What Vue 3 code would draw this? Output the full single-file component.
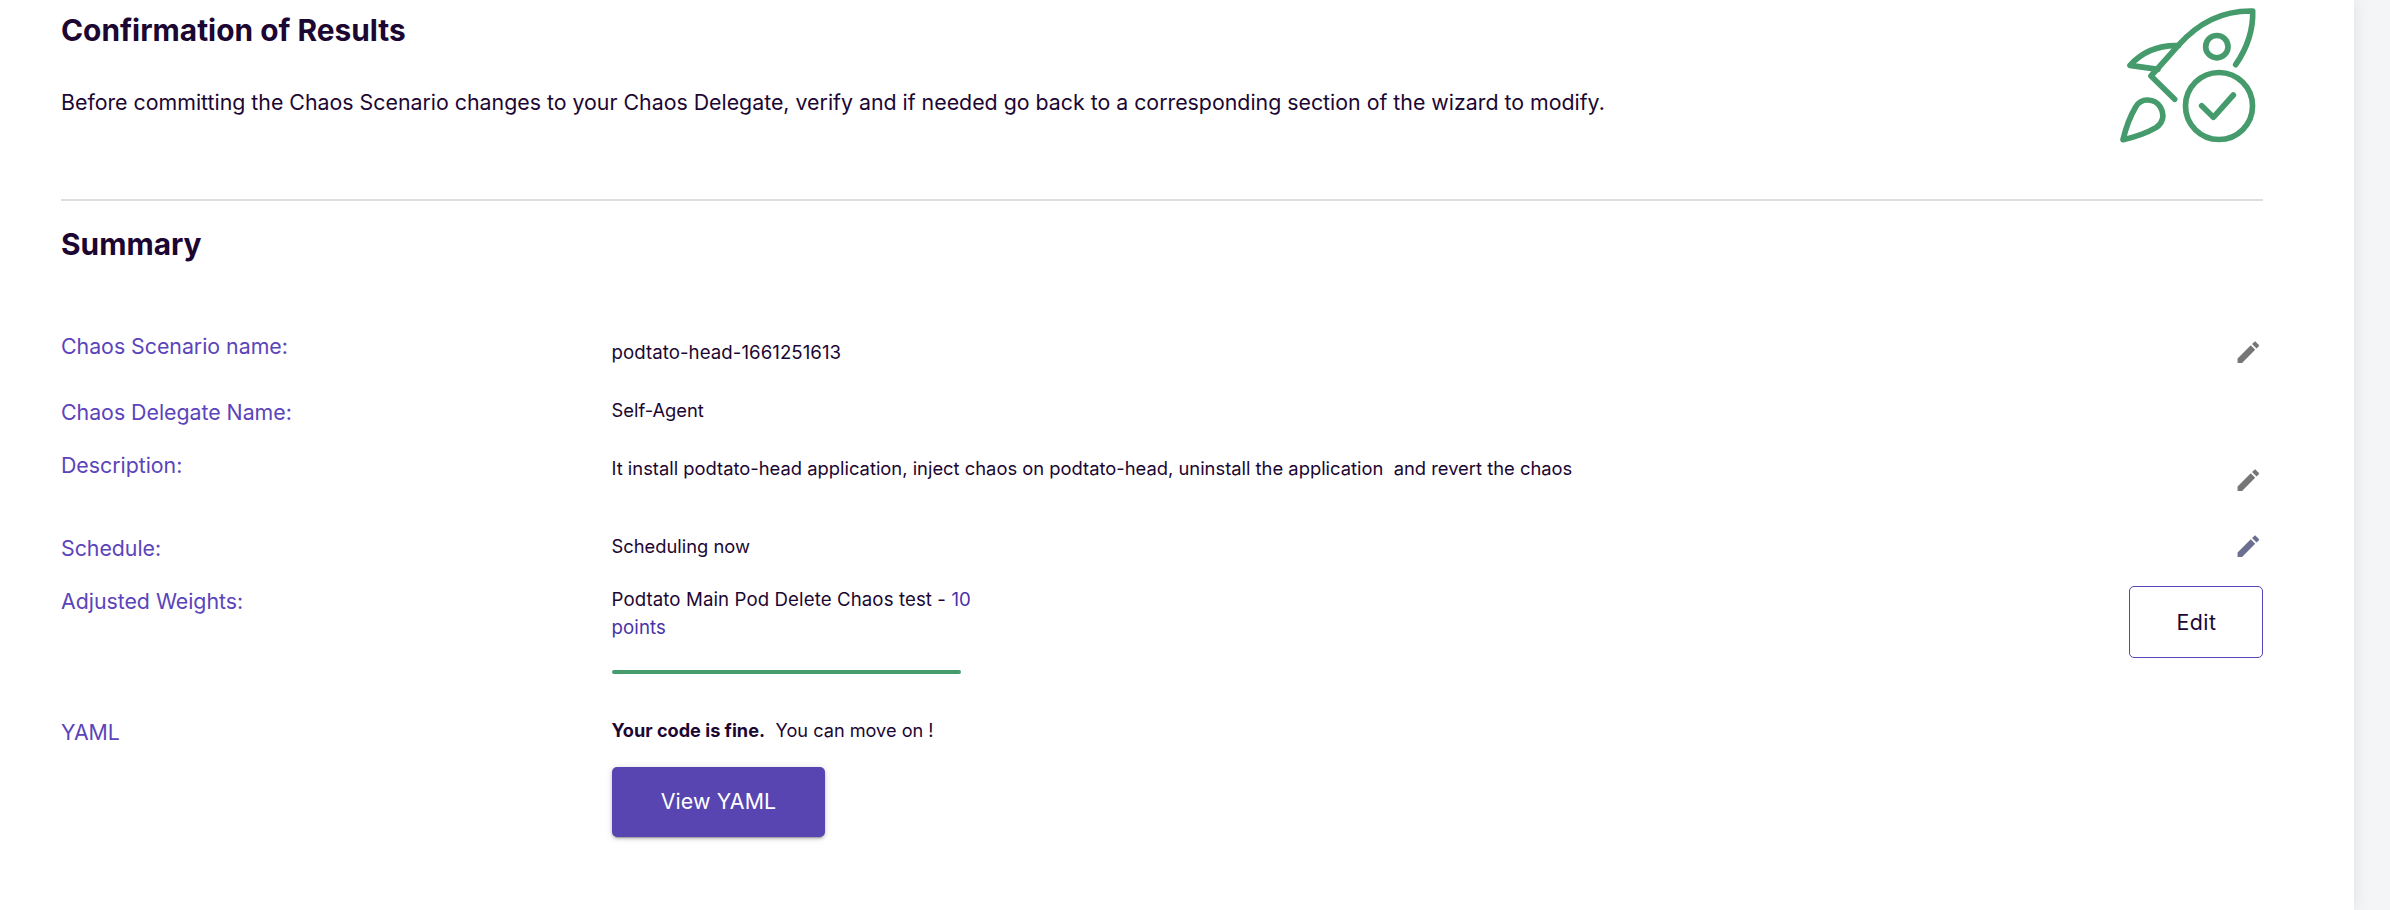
<script setup>
const rows = [
  { key: 'name', label: 'Chaos Scenario name:', value: 'podtato-head-1661251613', edit: true },
  { key: 'delegate', label: 'Chaos Delegate Name:', value: 'Self-Agent' },
  {
    key: 'description',
    label: 'Description:',
    value: 'It install podtato-head application, inject chaos on podtato-head, uninstall the application\u00a0 and revert the chaos',
    edit: true,
  },
  { key: 'schedule', label: 'Schedule:', value: 'Scheduling now', edit: true },
]
</script>

<template>
  <div class="page">
    <main class="card">
      <header class="header">
        <div>
          <h1 class="title">Confirmation of Results</h1>
          <p class="intro">Before committing the Chaos Scenario changes to your Chaos Delegate, verify and if needed go back to a corresponding section of the wizard to modify.</p>
        </div>
        <svg class="rocket" viewBox="60 20 410 410" fill="none" stroke="#469b6c" stroke-width="17" stroke-linecap="round" stroke-linejoin="round">
          <path d="M407 193C440 145 460 95 458 32C370 30 295 68 237 133L153 227L224 297" />
          <path d="M235 136C178 134 129 152 90 195L174 207" />
          <circle cx="350.5" cy="139" r="33.5" />
          <circle cx="357" cy="317" r="100.5" />
          <path d="M305 316L340 351L400 284" />
          <path d="M69 418C77 385 89 350 107 320C123 290 165 294 181 320C196 345 187 369 169 381C140 398 105 410 69 418Z" />
        </svg>
      </header>

      <h2 class="title summary-title">Summary</h2>

      <section class="summary">
        <div v-for="row in rows" :key="row.key" class="row" :class="row.key">
          <span class="label">{{ row.label }}</span>
          <span class="value">{{ row.value }}</span>
          <svg v-if="row.edit" class="pencil" viewBox="0 0 24 24">
            <path fill="currentColor" d="M3 17.25V21h3.75L17.81 9.94l-3.75-3.75L3 17.25zM20.71 7.04c.39-.39.39-1.02 0-1.41l-2.34-2.34c-.39-.39-1.02-.39-1.41 0l-1.83 1.83 3.75 3.75 1.83-1.83z" />
          </svg>
        </div>

        <div class="row adjusted">
          <span class="label">Adjusted Weights:</span>
          <div>
            <p class="weight">Podtato Main Pod Delete Chaos test - <span class="points">10 points</span></p>
            <div class="bar"></div>
          </div>
          <button class="btn outlined">Edit</button>
        </div>

        <div class="row yaml">
          <span class="label">YAML</span>
          <div>
            <p class="code"><strong>Your code is fine.</strong><span class="move">You can move on !</span></p>
            <button class="btn filled">View YAML</button>
          </div>
        </div>
      </section>
    </main>
  </div>
</template>

<style>
body {
  background: #f4f5f7;
}
</style>

<style scoped>
.page {
  height: 910px;
  overflow: hidden;
  font-family: Inter, sans-serif;
  color: #1c0732;
}
.card {
  box-sizing: border-box;
  width: 2354px;
  height: 910px;
  padding: 0 91px 0 61px;
  background: #fff;
  box-shadow: 0 0 16px rgba(0, 0, 0, 0.09);
}
h1,
h2,
p {
  margin: 0;
}
.header {
  box-sizing: border-box;
  display: flex;
  justify-content: space-between;
  height: 201px;
  padding-top: 10px;
  border-bottom: 2px solid #dedede;
}
.title {
  font-size: 29.87px;
  line-height: 40px;
  font-weight: 700;
}
.intro {
  margin-top: 36px;
  font-size: 21.33px;
  line-height: 32px;
}
.rocket {
  width: 136.7px;
  height: 136.7px;
  margin: -3.3px 6px 0 0;
}
.summary-title {
  margin-top: 23px;
}
.summary {
  display: flex;
  flex-direction: column;
  margin-top: 66px;
}
.row {
  display: grid;
  grid-template-columns: 550.5px 1fr auto;
  align-items: start;
}
.label {
  font-size: 21.33px;
  line-height: 32px;
  letter-spacing: -0.02px;
  color: #5b44ba;
}
.value {
  font-size: 18.33px;
  line-height: 28px;
}
.weight {
  width: 370px;
  padding-top: 1px;
  font-size: 18.67px;
  line-height: 28px;
  letter-spacing: 0.09px;
}
.pencil {
  width: 28.6px;
  height: 28.6px;
  color: #767676;
}
.name {
  height: 66px;
}
.name .value {
  padding-top: 9px;
  font-size: 18.67px;
  letter-spacing: 0.05px;
}
.name .pencil {
  margin-top: 8.4px;
}
.delegate {
  height: 53px;
}
.description {
  height: 83px;
}
.description .value {
  padding-top: 5px;
  font-size: 18.37px;
}
.description .pencil {
  margin-top: 16.5px;
}
.schedule {
  height: 53px;
}
.schedule .pencil {
  margin-top: 0.3px;
  color: #6b6f90;
}
.adjusted {
  height: 131px;
}
.points {
  color: #4a32a8;
}
.bar {
  width: 349px;
  height: 4px;
  margin: 28px 0 0 0.5px;
  border-radius: 2px;
  background: #469b6c;
}
.code {
  font-size: 18.15px;
  line-height: 28px;
}
.move {
  margin-left: 10.5px;
}
.btn {
  font-family: inherit;
  font-size: 21.33px;
  font-weight: 400;
  line-height: 32px;
  border-radius: 5px;
}
.outlined {
  width: 134px;
  height: 72px;
  margin-top: 1px;
  padding: 0 0 1px 1px;
  border: 1px solid #5b44ba;
  background: #fff;
  color: #1c0732;
  letter-spacing: 0.5px;
}
.filled {
  display: block;
  width: 213px;
  height: 70px;
  margin: 23px 0 0 0.5px;
  padding: 0 0 2px;
  border: 0;
  background: #5845b2;
  color: #fff;
  letter-spacing: 0.15px;
  box-shadow: 0 4px 1px -3px rgba(0, 0, 0, 0.2), 0 2px 3px rgba(0, 0, 0, 0.16), 0 1px 7px rgba(0, 0, 0, 0.14);
}
</style>
